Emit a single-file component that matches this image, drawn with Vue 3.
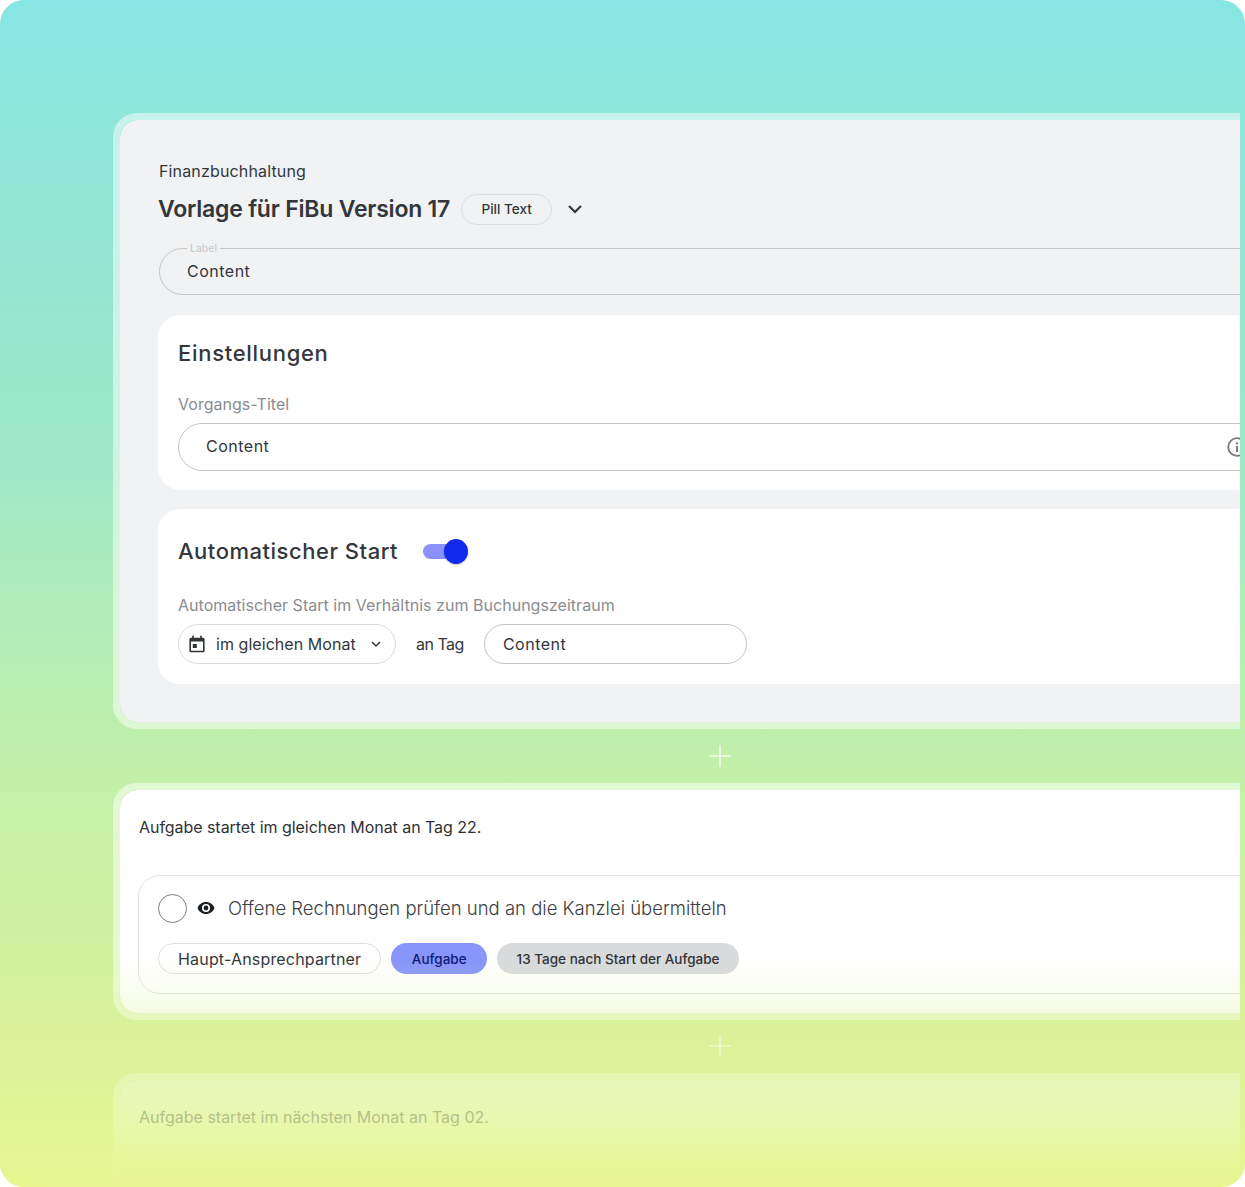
<script setup>
const chips = [
  { text: 'Aufgabe', kind: 'blue' },
  { text: '13 Tage nach Start der Aufgabe', kind: 'grey' }
]
</script>

<template>
  <div class="page">
    <section class="frame first">
      <div class="pane grey">
        <div class="pane-body">
          <p class="crumb">Finanzbuchhaltung</p>
          <div class="title-row">
            <h1>Vorlage für FiBu Version 17</h1>
            <span class="pill">Pill Text</span>
            <svg class="chev" width="16" height="10" viewBox="0 0 16 10" fill="none"><path d="M2 2l6 6 6-6" stroke="#34383c" stroke-width="2.2"/></svg>
          </div>
          <div class="field labelled">
            <span class="legend">Label</span>
            <span>Content</span>
          </div>
          <div class="box settings">
            <h2 class="wide">Einstellungen</h2>
            <label class="cap">Vorgangs-Titel</label>
            <div class="field plain">
              <span>Content</span>
              <svg class="info" width="20" height="20" viewBox="0 0 20 20" fill="none">
                <circle cx="10" cy="10" r="8.8" stroke="#77797c" stroke-width="1.8"/>
                <rect x="9" y="9" width="2" height="6" fill="#77797c"/>
                <rect x="9" y="5.400" width="2" height="2" fill="#77797c"/>
              </svg>
            </div>
          </div>
          <div class="box auto">
            <div class="auto-head">
              <h2>Automatischer Start</h2>
              <span class="toggle"><i></i></span>
            </div>
            <label class="cap">Automatischer Start im Verhältnis zum Buchungszeitraum</label>
            <div class="auto-row">
              <div class="select">
                <svg width="16" height="18" viewBox="0 0 16 18" fill="none">
                  <path d="M2 3.500h12a.8.800 0 0 1 .8.800v11.400a.8.800 0 0 1-.8.800H2a.8.800 0 0 1-.8-.8V4.300a.8.800 0 0 1 .8-.8z" stroke="#303437" stroke-width="1.600"/>
                  <path d="M1 3h14v3.500H1z" fill="#303437"/>
                  <path d="M4 .8v3M12 .8v3" stroke="#303437" stroke-width="1.700"/>
                  <rect x="3.800" y="9" width="4" height="4" fill="#303437"/>
                </svg>
                <span>im gleichen Monat</span>
                <svg width="10" height="7" viewBox="0 0 10 7" fill="none"><path d="M1 1l4 4 4-4" stroke="#34383c" stroke-width="1.500"/></svg>
              </div>
              <span class="an-tag">an Tag</span>
              <div class="small-input">Content</div>
            </div>
          </div>
        </div>
      </div>
    </section>

    <div class="plus-row">
      <svg width="24" height="24" viewBox="0 0 24 24"><path d="M12 1v22M1 12h22" stroke="#fff" stroke-opacity=".8" stroke-width="1.600"/></svg>
    </div>

    <section class="frame">
      <div class="pane white">
        <p class="step">Aufgabe startet im gleichen Monat an Tag 22.</p>
        <div class="task">
          <div class="task-head">
            <span class="radio"></span>
            <svg width="18" height="12" viewBox="0 0 18 12"><path d="M9 0C5 0 1.800 2.500.5 6 1.800 9.500 5 12 9 12s7.200-2.500 8.500-6C16.200 2.500 13 0 9 0zm0 10a4 4 0 1 1 0-8 4 4 0 0 1 0 8zm0-6.400a2.400 2.400 0 1 0 0 4.800 2.400 2.400 0 0 0 0-4.800z" fill="#1e2124"/></svg>
            <span class="task-title">Offene Rechnungen prüfen und an die Kanzlei übermitteln</span>
          </div>
          <div class="chips">
            <span class="chip outline">Haupt-Ansprechpartner</span>
            <span v-for="c in chips" :key="c.text" class="chip" :class="c.kind">{{ c.text }}</span>
          </div>
        </div>
      </div>
    </section>

    <div class="plus-row second">
      <svg width="24" height="24" viewBox="0 0 24 24"><path d="M12 1v22M1 12h22" stroke="#fff" stroke-opacity=".8" stroke-width="1.600"/></svg>
    </div>

    <section class="frame">
      <div class="pane white last">
        <p class="step">Aufgabe startet im nächsten Monat an Tag 02.</p>
      </div>
    </section>

    <div class="fade"></div>
  </div>
</template>

<style>
html, body { margin: 0; background: #fff; }
</style>

<style scoped>
* { box-sizing: border-box; }
.page {
  position: relative;
  width: 1245px;
  height: 1187px;
  overflow: hidden;
  padding: 113px 5px 0 113px;
  border-radius: 24px;
  background: linear-gradient(180deg, #87e5e3 0%, #8fe5d8 12%, #9de8c8 38%, #c2f0a9 65%, #d9f299 88%, #e7f690 100%);
  font-family: Inter, "Liberation Sans", sans-serif;
  color: #33373b;
}
.frame {
  border-radius: 24px 0 0 24px;
  border: 7px solid rgba(255,255,255,.5);
  border-right: 0;
  overflow: hidden;
  background-clip: padding-box;
}
.pane { border-radius: 18px 0 0 18px; }
.grey { background: #f1f2f4; padding: 39px 0 38px 38px; height: 602px; overflow: hidden; }
.pane-body { width: 1200px; }
.crumb { margin: 0 0 0 1px; font-size: 16px; line-height: 24px; letter-spacing: .15px; }
.title-row { display: flex; align-items: center; margin: 10px 0 0 0; height: 32px; }
h1 { margin: 0; font-size: 23px; line-height: 32px; font-weight: 560; letter-spacing: -.22px; }
.pill {
  margin-left: 11px; width: 91px; height: 31px; border: 1px solid #dcdde0; border-radius: 16px;
  display: flex; align-items: center; justify-content: center; font-size: 13.500px; font-weight: 500;
}
.chev { margin-left: 15px; }
.field {
  position: relative; display: flex; align-items: center; height: 47px; border: 1px solid #c5c6c9;
  border-radius: 24px; padding-left: 27px; font-size: 16px; letter-spacing: .5px;
}
.labelled { margin: 23px 0 0 1px; padding-bottom: 2px; }
.legend {
  position: absolute; left: 27px; top: -6px; padding: 0 3px; background: #f1f2f4;
  font-size: 10.500px; line-height: 12px; color: #c6c7ca; letter-spacing: 0;
}
.box { background: #fff; border-radius: 22px; padding: 20px 0 0 20px; }
.settings { margin-top: 20px; height: 175px; }
.auto { margin-top: 19px; height: 175px; }
h2 { margin: 0; font-size: 22px; line-height: 36px; font-weight: 520; letter-spacing: .52px; }
h2.wide { letter-spacing: .7px; }
.cap { display: block; margin-top: 21px; font-size: 16px; line-height: 24px; color: #8a8c90; letter-spacing: .03px; }
.plain { margin-top: 7px; width: 1180px; height: 48px; padding: 0 113px 2px 27px; }
.info { position: absolute; left: 1048px; top: 13px; }
.auto-head { display: flex; align-items: center; height: 44px; }
.toggle { position: relative; margin-left: 25px; width: 42px; height: 15px; border-radius: 8px; background: #8892f8; }
.toggle i { position: absolute; right: -3px; top: -5px; width: 24px; height: 25px; border-radius: 50%; background: #1029ec; box-shadow: 0 1px 2px rgba(0,0,0,.25); }
.auto .cap { margin-top: 20px; }
.auto-row { display: flex; align-items: center; margin-top: 7px; }
.select {
  display: flex; align-items: center; width: 218px; height: 40px; border: 1px solid #d9dadd; border-radius: 20px;
  padding-left: 10px; font-size: 16px;
}
.select span { margin: 0 15px 0 11px; font-size: 16px; white-space: nowrap; letter-spacing: .05px; }
.an-tag { margin-left: 20px; font-size: 16px; letter-spacing: -.5px; }
.small-input {
  margin-left: 20px; width: 263px; height: 40px; border: 1px solid #c3c4c7; border-radius: 20px;
  padding-left: 18px; display: flex; align-items: center; font-size: 16px; letter-spacing: .5px;
}
.plus-row { height: 54px; display: flex; align-items: center; padding-left: 595px; }
.second { height: 53px; padding-bottom: 2px; }
.white { background: #fff; height: 223px; padding: 25px 0 0 19px; }
.step { margin: 0; font-size: 16px; line-height: 24px; color: #2f3236; letter-spacing: -.05px; }
.task { margin: 36px 0 0 -1px; width: 1200px; height: 119px; border: 1px solid #e2e3e5; border-radius: 22px; padding: 17px 0 0 19px; }
.task-head { display: flex; align-items: center; height: 30px; }
.radio { width: 29px; height: 29px; border-radius: 50%; border: 1px solid #7b7e80; }
.task-head svg { margin-left: 10px; }
.task-title { margin-left: 13px; font-size: 18.500px; font-weight: 300; color: #3b3e42; }
.chips { display: flex; align-items: center; gap: 10px; margin-top: 20px; }
.chip { height: 31px; display: flex; align-items: center; padding: 0 20.500px; border-radius: 16px; font-size: 13.500px; font-weight: 500; white-space: nowrap; }
.outline { border: 1px solid #dddee0; font-size: 16px; font-weight: 400; background: #fff; letter-spacing: .18px; padding: 0 19px; }
.blue { background: #8895fb; color: #0c1a74; }
.chips .grey { background: #d9dadc; color: #2f3236; padding: 0 19.500px; height: 31px; overflow: visible; }
.last { background: linear-gradient(180deg, rgba(255,255,255,.75), rgba(255,255,255,.35) 70%); height: 140px; padding-top: 25px; }
.last .step { color: #6f7276; letter-spacing: 0; }
.fade {
  position: absolute; left: 0; right: 0; top: 960px; bottom: 0;
  background: linear-gradient(180deg, rgba(220,243,155,0) 0%, rgba(220,243,155,.28) 22%, rgba(220,243,155,.55) 50%, rgba(226,245,150,.6) 70%, rgba(231,246,144,.98) 100%);
  pointer-events: none;
}
</style>
